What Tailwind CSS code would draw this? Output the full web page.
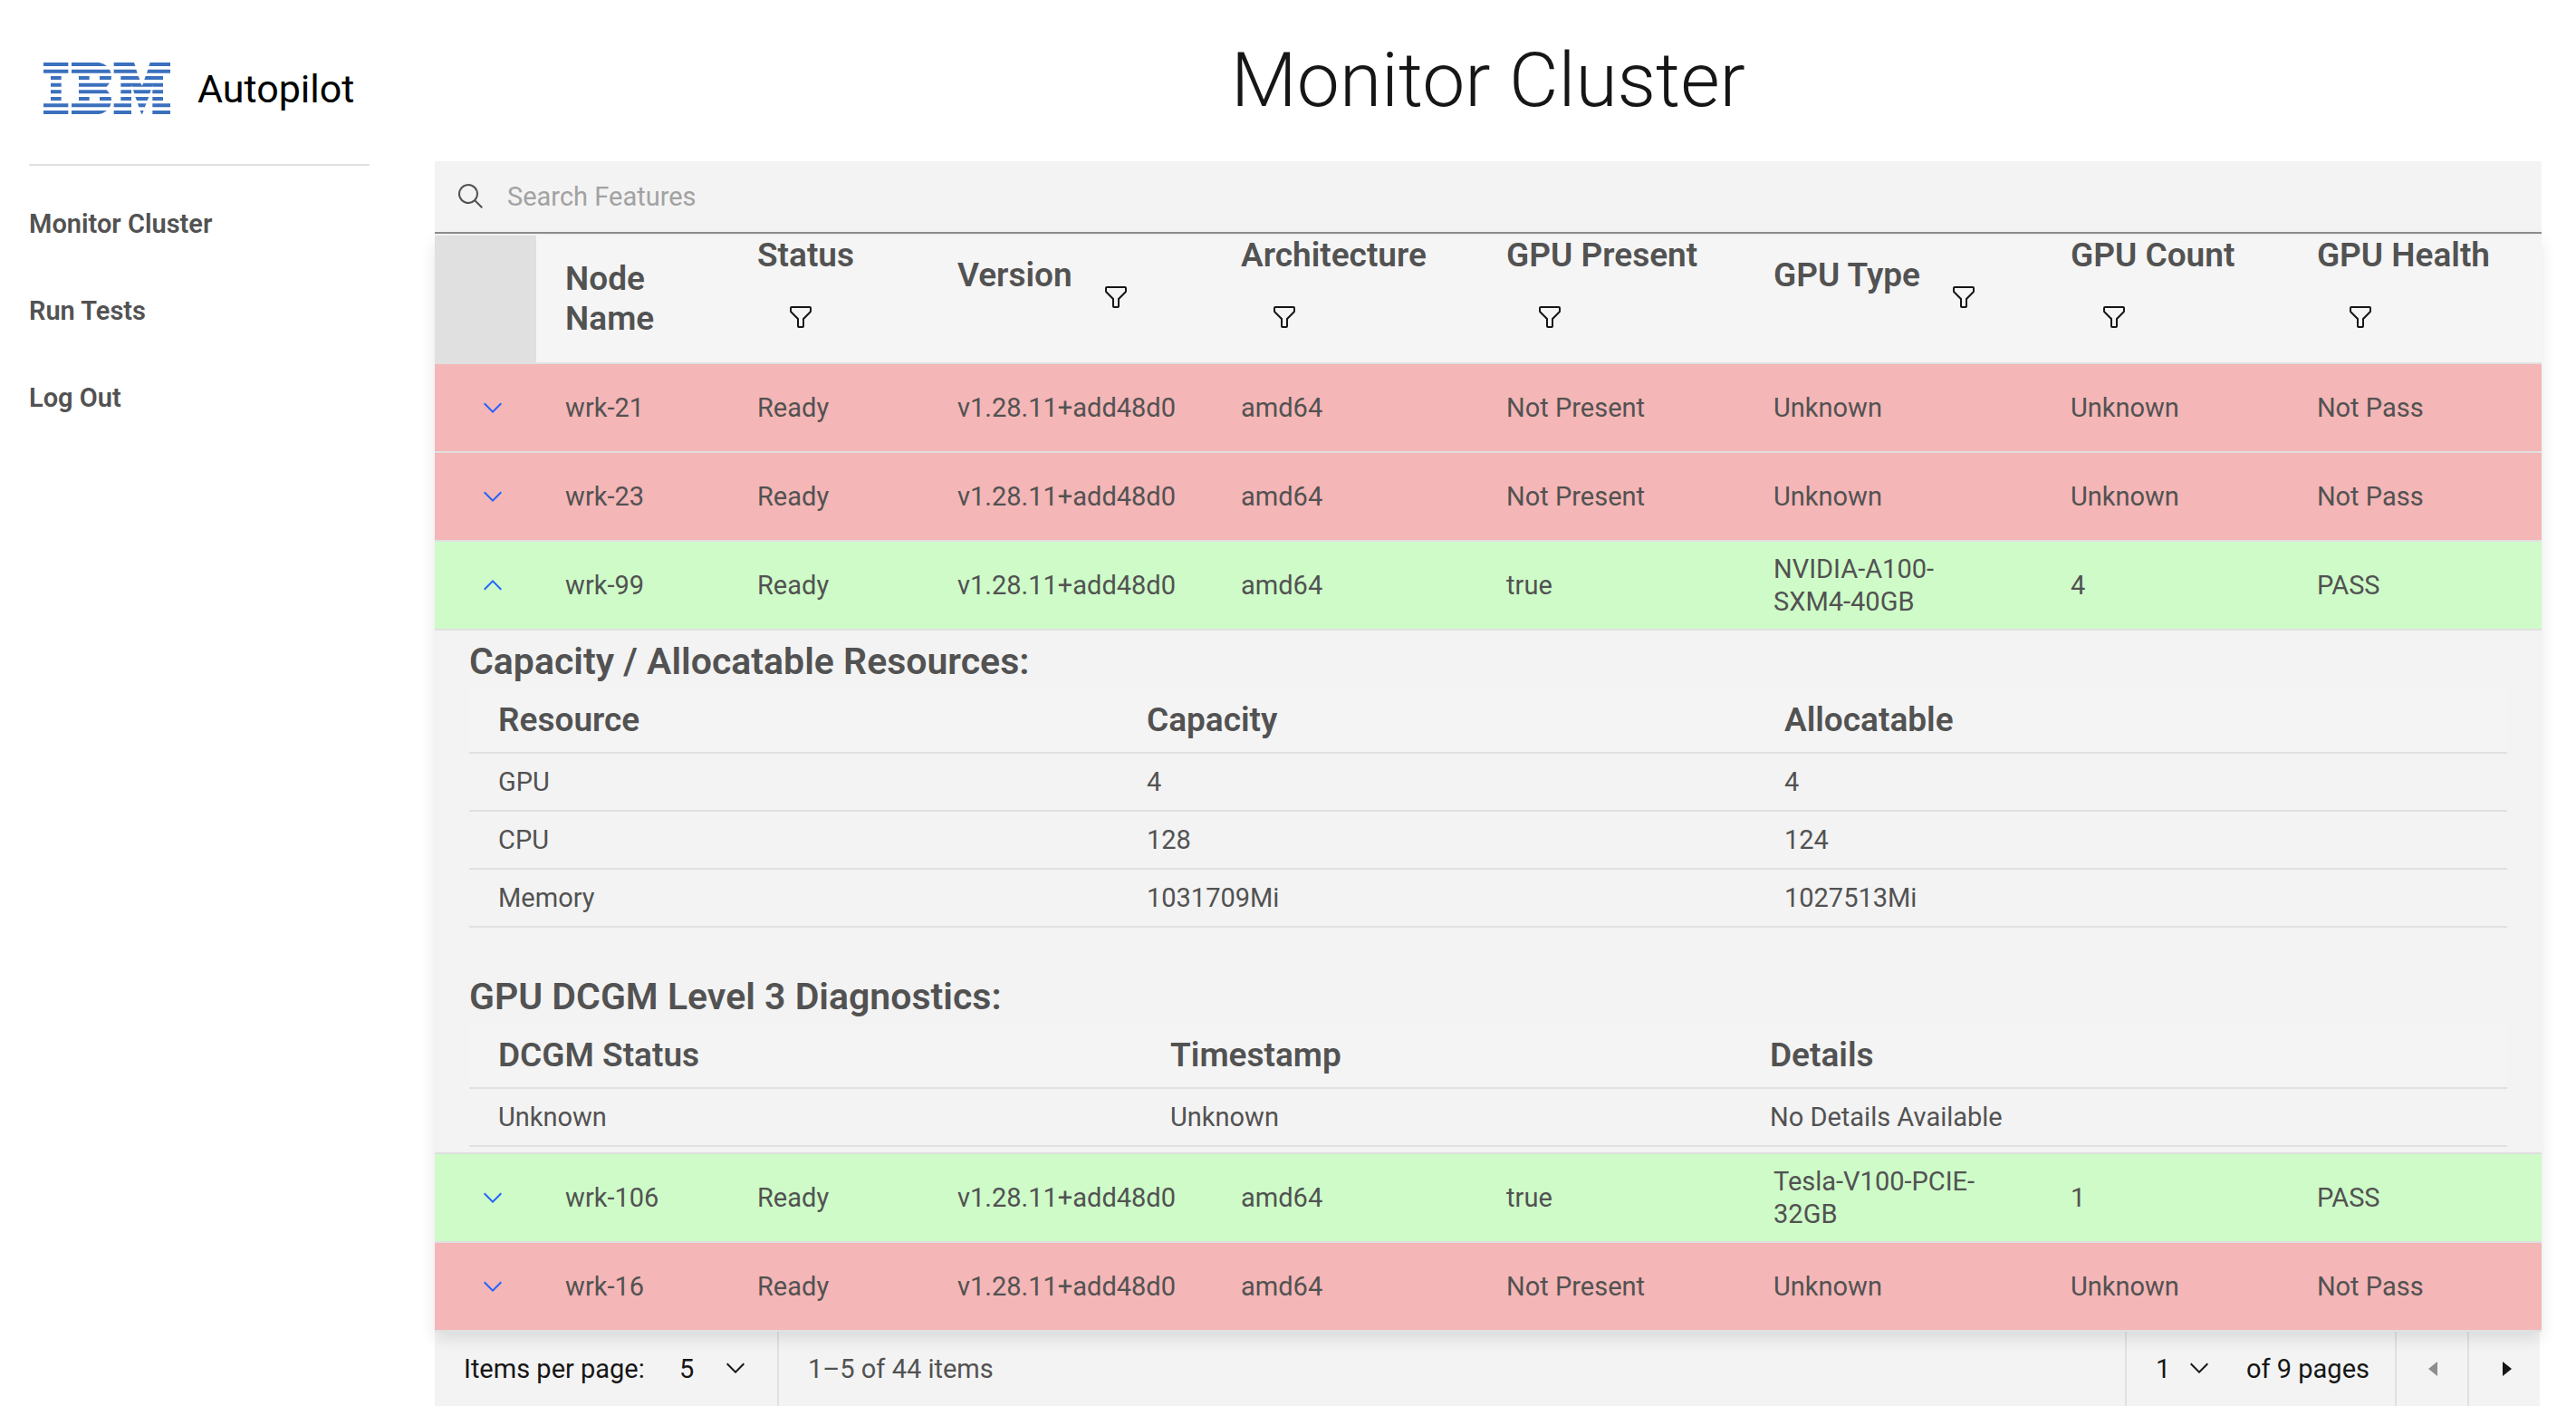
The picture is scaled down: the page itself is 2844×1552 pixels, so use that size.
<!DOCTYPE html>
<html lang="en">
<head>
<meta charset="utf-8">
<meta name="viewport" content="width=device-width, initial-scale=1">
<title>Autopilot – Monitor Cluster</title>
<script src="https://cdn.jsdelivr.net/npm/@tailwindcss/browser@4"></script>
</head>
<body class="bg-white font-['Roboto',sans-serif] text-[29px] leading-9 text-[#525252]">

<svg class="hidden" aria-hidden="true">
  <symbol id="chevron" viewBox="0 0 16 16"><path d="M8 11 3 6l.7-.7L8 9.6l4.3-4.3.7.7z"/></symbol>
  <symbol id="filter" viewBox="0 0 32 32"><path d="M18 28h-4a2 2 0 0 1-2-2v-7.59L4.59 11A2 2 0 0 1 4 9.59V6a2 2 0 0 1 2-2h20a2 2 0 0 1 2 2v3.59a2 2 0 0 1-.59 1.41L20 18.41V26a2 2 0 0 1-2 2ZM6 6v3.59l8 8V26h4v-8.41l8-8V6Z"/></symbol>
</svg>

<div class="flex items-start">
  <aside class="w-[408px] shrink-0 pl-8">
    <div class="flex h-[183px] items-center gap-[30px] border-b-2 border-[#e0e0e0] pt-[14px] pl-4">
      <svg class="h-[57px] w-[140px]" viewBox="0 0 420 171" fill="#3b70be" role="img" aria-label="IBM">
        <path d="M0 0H82V12H0zM0 23H82V35H0zM24 45H59V57H24zM24 68H59V80H24zM24 91H59V103H24zM24 114H59V126H24zM0 136H82V148H0zM0 159H82V171H0z"/>
        <path d="M93 0H184Q200 3 210 12H93zM93 23H219L224 35H93zM117 45H152V57H117zM186 45H225L224 57H186zM117 68H219L209 80H117zM117 91H209L219 103H117zM117 114H152V126H117zM186 114H224L225 126H186zM93 136H224L219 148H93zM93 159H210Q200 168 184 171H93z"/>
        <path d="M233 0H300L304 12H233zM353 0H420V12H349zM233 23H307L311 35H233zM346 23H420V35H342zM256 45H314L319 57H256zM338 45H396V57H334zM256 68H322L326 77 331 68H396V80H361L362 74 360 80H293L291 74V80H256zM256 91H291V103H256zM297 91H356L352 103H301zM361 91H396V103H361zM256 114H291V126H256zM304 114H349L344 126H309zM361 114H396V126H361zM233 136H291V148H233zM312 136H340L336 148H316zM361 136H420V148H361zM233 159H291V171H233zM320 159H332L327 171H325zM361 159H420V171H361z"/>
      </svg>
      <span class="text-[43px] leading-[56px] text-black">Autopilot</span>
    </div>
    <nav class="mt-4 flex flex-col font-semibold" aria-label="Main">
      <a href="#monitor" class="flex h-24 items-center">Monitor Cluster</a>
      <a href="#tests" class="flex h-24 items-center">Run Tests</a>
      <a href="#logout" class="flex h-24 items-center">Log Out</a>
    </nav>
  </aside>

  <main class="ml-[72px] mr-[38px] min-w-0 flex-1">
    <h1 class="flex h-[178px] items-center justify-center text-[84px] leading-[100px] font-light text-[#161616]">Monitor Cluster</h1>

    <div class="bg-[#f3f3f3] pb-0.5">
      <label for="search" class="flex h-20 items-center gap-6 border-b-2 border-[#8d8d8d] pl-6">
        <svg class="size-8 shrink-0" viewBox="0 0 32 32" fill="#525252" aria-hidden="true"><path d="m29 27.59-7.55-7.56a11.02 11.02 0 1 0-1.42 1.42L27.59 29ZM4 13a9 9 0 1 1 9 9 9.01 9.01 0 0 1-9-9Z"/></svg>
        <input id="search" type="text" aria-label="Search Features" placeholder="Search Features" class="h-full min-w-0 flex-1 bg-transparent text-[#161616] outline-none placeholder:text-[#a2a2a2]">
      </label>
    </div>

    <div class="relative z-10 bg-[#f3f3f3] shadow-[0_8px_16px_rgba(0,0,0,0.1)]">
      <table class="w-full table-fixed border-separate border-spacing-0 text-left">
        <colgroup>
          <col class="w-[4.82%]"><col class="w-[9.11%]"><col class="w-[9.5%]"><col class="w-[13.46%]"><col class="w-[12.6%]"><col class="w-[12.68%]"><col class="w-[14.1%]"><col class="w-[11.69%]"><col class="w-[12.04%]">
        </colgroup>
        <thead class="bg-[#f5f5f5] text-[37px] leading-[44px]">
          <tr class="h-[142px] *:border-b-2 *:border-[#e0e0e0] *:p-0 *:pl-8 *:font-semibold">
            <th scope="col" aria-label="Expand" class="bg-[#e0e0e0]"></th>
            <th scope="col" class="align-middle">Node<br>Name</th>
            <th scope="col" class="align-top">Status<button type="button" aria-label="Filter status" class="mt-[14px] flex h-16 w-24 items-center justify-center"><svg class="size-8 fill-[#161616]"><use href="#filter"/></svg></button></th>
            <th scope="col" class="align-top"><div class="mt-[22px] flex items-start">Version<button type="button" aria-label="Filter version" class="mt-[14px] flex h-16 w-24 items-center justify-center"><svg class="size-8 fill-[#161616]"><use href="#filter"/></svg></button></div></th>
            <th scope="col" class="align-top">Architecture<button type="button" aria-label="Filter architecture" class="mt-[14px] flex h-16 w-24 items-center justify-center"><svg class="size-8 fill-[#161616]"><use href="#filter"/></svg></button></th>
            <th scope="col" class="align-top">GPU Present<button type="button" aria-label="Filter GPU present" class="mt-[14px] flex h-16 w-24 items-center justify-center"><svg class="size-8 fill-[#161616]"><use href="#filter"/></svg></button></th>
            <th scope="col" class="align-top"><div class="mt-[22px] flex items-start">GPU Type<button type="button" aria-label="Filter GPU type" class="mt-[14px] flex h-16 w-24 items-center justify-center"><svg class="size-8 fill-[#161616]"><use href="#filter"/></svg></button></div></th>
            <th scope="col" class="align-top">GPU Count<button type="button" aria-label="Filter GPU count" class="mt-[14px] flex h-16 w-24 items-center justify-center"><svg class="size-8 fill-[#161616]"><use href="#filter"/></svg></button></th>
            <th scope="col" class="align-top">GPU Health<button type="button" aria-label="Filter GPU health" class="mt-[14px] flex h-16 w-24 items-center justify-center"><svg class="size-8 fill-[#161616]"><use href="#filter"/></svg></button></th>
          </tr>
        </thead>
        <tbody>
          <tr class="h-[98px] bg-[#f4b6b6] *:border-b-2 *:border-[#e0e0e0] *:pl-8">
            <td><button type="button" aria-label="Expand wrk-21" aria-expanded="false" class="ml-4 block"><svg class="size-8 fill-[#2463ff]"><use href="#chevron"/></svg></button></td>
            <td>wrk-21</td><td>Ready</td><td>v1.28.11+add48d0</td><td>amd64</td><td>Not Present</td><td>Unknown</td><td>Unknown</td><td>Not Pass</td>
          </tr>
          <tr class="h-[98px] bg-[#f4b6b6] *:border-b-2 *:border-[#e0e0e0] *:pl-8">
            <td><button type="button" aria-label="Expand wrk-23" aria-expanded="false" class="ml-4 block"><svg class="size-8 fill-[#2463ff]"><use href="#chevron"/></svg></button></td>
            <td>wrk-23</td><td>Ready</td><td>v1.28.11+add48d0</td><td>amd64</td><td>Not Present</td><td>Unknown</td><td>Unknown</td><td>Not Pass</td>
          </tr>
          <tr class="h-[98px] bg-[#cefbc8] *:border-b-2 *:border-[#e0e0e0] *:pl-8">
            <td><button type="button" aria-label="Collapse wrk-99" aria-expanded="true" class="ml-4 block"><svg class="size-8 rotate-180 fill-[#2463ff]"><use href="#chevron"/></svg></button></td>
            <td>wrk-99</td><td>Ready</td><td>v1.28.11+add48d0</td><td>amd64</td><td>true</td><td>NVIDIA-A100-<br>SXM4-40GB</td><td>4</td><td>PASS</td>
          </tr>
          <tr>
            <td colspan="9" class="border-b-2 border-[#e0e0e0] px-[38px] pb-1.5 pt-1">
              <h2 class="text-[41px] leading-[60px] font-semibold">Capacity / Allocatable Resources:</h2>
              <table class="w-full table-fixed border-separate border-spacing-0">
                <colgroup><col class="w-[31.82%]"><col class="w-[31.29%]"><col class="w-[36.89%]"></colgroup>
                <thead class="bg-[#f4f4f4] text-[37px] leading-[44px]">
                  <tr class="h-[72px] *:border-b-2 *:border-[#e0e0e0] *:pl-8 *:font-semibold"><th scope="col">Resource</th><th scope="col">Capacity</th><th scope="col">Allocatable</th></tr>
                </thead>
                <tbody>
                  <tr class="h-16 *:border-b-2 *:border-[#e0e0e0] *:pl-8"><td>GPU</td><td>4</td><td>4</td></tr>
                  <tr class="h-16 *:border-b-2 *:border-[#e0e0e0] *:pl-8"><td>CPU</td><td>128</td><td>124</td></tr>
                  <tr class="h-16 *:border-b-2 *:border-[#e0e0e0] *:pl-8"><td>Memory</td><td>1031709Mi</td><td>1027513Mi</td></tr>
                </tbody>
              </table>
              <h2 class="mt-[46px] text-[41px] leading-[60px] font-semibold">GPU DCGM Level 3 Diagnostics:</h2>
              <table class="w-full table-fixed border-separate border-spacing-0">
                <colgroup><col class="w-[32.98%]"><col class="w-[29.42%]"><col class="w-[37.6%]"></colgroup>
                <thead class="bg-[#f4f4f4] text-[37px] leading-[44px]">
                  <tr class="h-[72px] *:border-b-2 *:border-[#e0e0e0] *:pl-8 *:font-semibold"><th scope="col">DCGM Status</th><th scope="col">Timestamp</th><th scope="col">Details</th></tr>
                </thead>
                <tbody>
                  <tr class="h-16 *:border-b-2 *:border-[#e0e0e0] *:pl-8"><td>Unknown</td><td>Unknown</td><td>No Details Available</td></tr>
                </tbody>
              </table>
            </td>
          </tr>
          <tr class="h-[98px] bg-[#cefbc8] *:border-b-2 *:border-[#e0e0e0] *:pl-8">
            <td><button type="button" aria-label="Expand wrk-106" aria-expanded="false" class="ml-4 block"><svg class="size-8 fill-[#2463ff]"><use href="#chevron"/></svg></button></td>
            <td>wrk-106</td><td>Ready</td><td>v1.28.11+add48d0</td><td>amd64</td><td>true</td><td>Tesla-V100-PCIE-<br>32GB</td><td>1</td><td>PASS</td>
          </tr>
          <tr class="h-[98px] bg-[#f4b6b6] *:border-b-2 *:border-[#e0e0e0] *:pl-8">
            <td><button type="button" aria-label="Expand wrk-16" aria-expanded="false" class="ml-4 block"><svg class="size-8 fill-[#2463ff]"><use href="#chevron"/></svg></button></td>
            <td>wrk-16</td><td>Ready</td><td>v1.28.11+add48d0</td><td>amd64</td><td>Not Present</td><td>Unknown</td><td>Unknown</td><td>Not Pass</td>
          </tr>
        </tbody>
      </table>
    </div>

    <div class="mr-0.5 flex h-[82px] items-stretch bg-[#f3f3f3] text-[#161616]">
      <label for="page-size" class="flex w-[238px] items-center pl-8 whitespace-nowrap">Items per page:</label>
      <div class="relative w-[142px] border-r-2 border-[#e0e0e0]">
        <select id="page-size" class="h-full w-full appearance-none bg-transparent pl-8"><option>5</option><option>10</option><option>20</option></select>
        <svg class="pointer-events-none absolute right-[30px] top-6 size-8 fill-[#161616]"><use href="#chevron"/></svg>
      </div>
      <div class="flex flex-1 items-center pl-8 text-[#525252]">1–5 of 44 items</div>
      <div class="relative w-[102px] border-l-2 border-[#e0e0e0]">
        <select id="page" aria-label="Page" class="h-full w-full appearance-none bg-transparent pl-8"><option>1</option><option>2</option><option>3</option></select>
        <svg class="pointer-events-none absolute right-1 top-6 size-8 fill-[#161616]"><use href="#chevron"/></svg>
      </div>
      <label for="page" class="flex w-[196px] items-center pl-8 whitespace-nowrap">of 9 pages</label>
      <button type="button" aria-label="Previous page" disabled class="flex w-20 items-center justify-center border-l-2 border-[#e0e0e0] pl-1"><svg class="size-8" viewBox="0 0 32 32" fill="#8d8d8d"><path d="M20 24 10 16 20 8z"/></svg></button>
      <button type="button" aria-label="Next page" class="flex w-20 items-center justify-center border-l-2 border-[#e0e0e0] pl-1"><svg class="size-8" viewBox="0 0 32 32" fill="#161616"><path d="M12 8 22 16 12 24z"/></svg></button>
    </div>
  </main>
</div>
</body>
</html>
